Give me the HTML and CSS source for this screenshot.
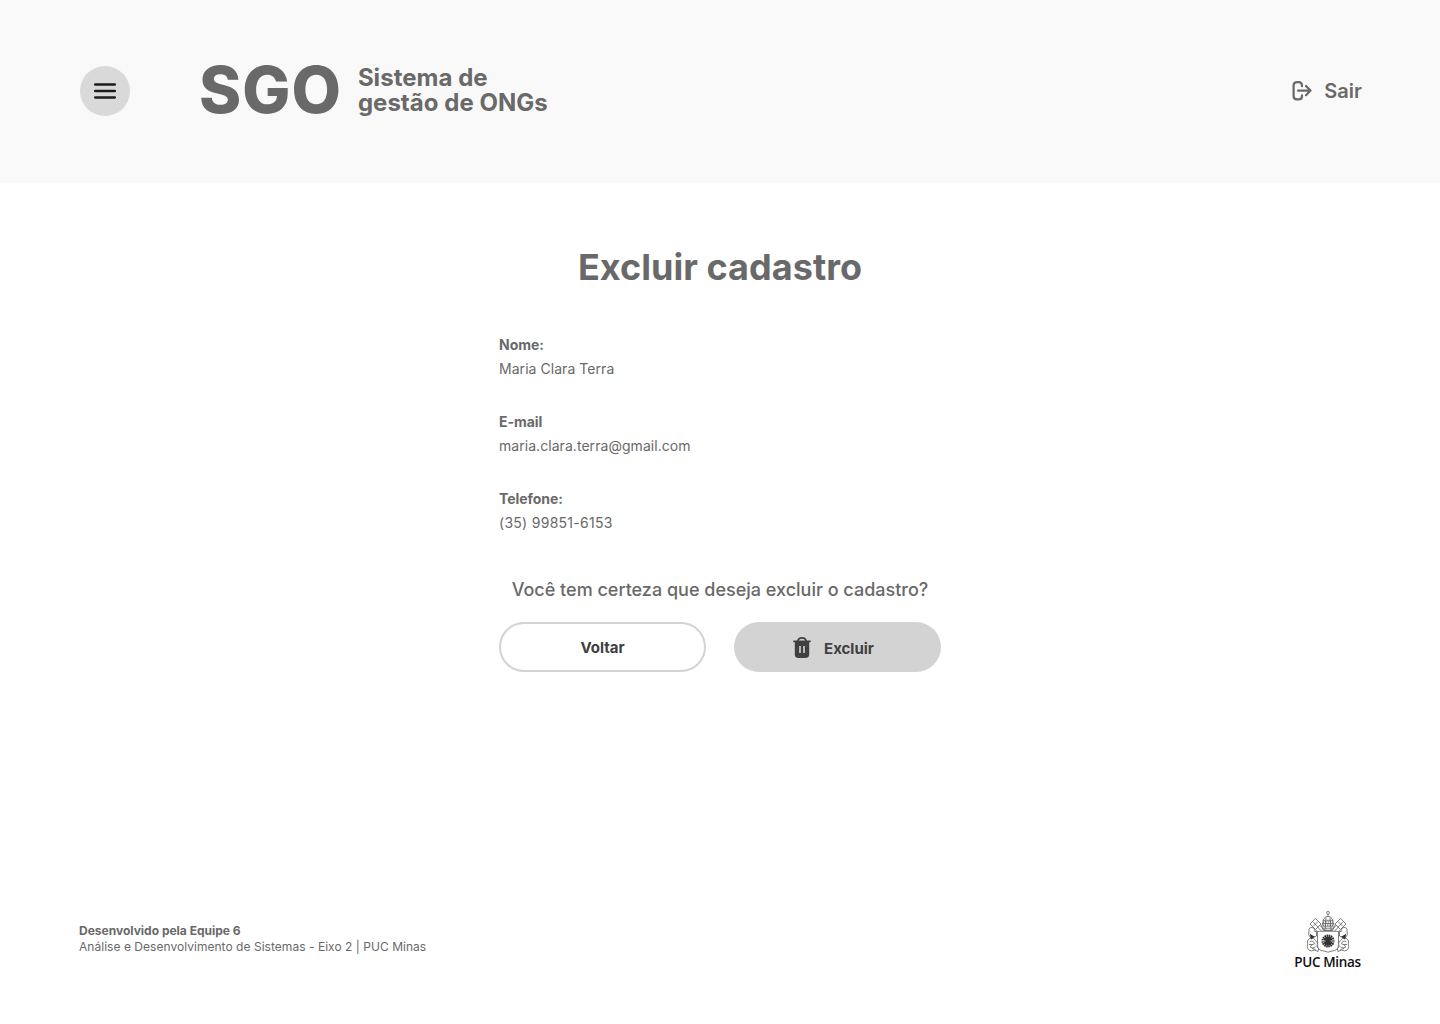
FILE: index.html
```html
<!DOCTYPE html>
<html lang="pt-BR">
<head>
<meta charset="utf-8">
<title>SGO - Excluir cadastro</title>
<link rel="stylesheet" href="styles.css">
</head>
<body>
<header class="header">
  <button class="menu" aria-label="Menu">
    <svg width="22" height="16" viewBox="0 0 22 16"><path d="M1.2 1.6h19.6M1.2 8h19.6M1.2 14.4h19.6" fill="none" stroke="#1d1d1d" stroke-width="2.5" stroke-linecap="round"/></svg>
  </button>
  <div class="brand">
    <span class="brand-short">SGO</span>
    <span class="brand-name">Sistema de<br>gestão de ONGs</span>
  </div>
  <a class="logout">
    <svg width="20" height="20" viewBox="0 0 20 20" fill="none" stroke="#696969" stroke-width="2.2" stroke-linecap="round" stroke-linejoin="round"><path d="M10 5.2V4.6Q10 1.2 6.6 1.2H5.2Q1.6 1.2 1.6 4.6V15Q1.6 18.4 5.2 18.4H6.6Q10 18.4 10 15V14.4M6 9.6H18.4M14 5 18.5 9.6 14 14.2"/></svg>
    <span>Sair</span>
  </a>
</header>
<main class="main">
  <h1 class="title">Excluir cadastro</h1>
  <section class="content">
    <dl class="fields">
      <div class="field"><dt>Nome:</dt><dd>Maria Clara Terra</dd></div>
      <div class="field"><dt>E-mail</dt><dd>maria.clara.terra@gmail.com</dd></div>
      <div class="field"><dt>Telefone:</dt><dd class="phone">(35) 99851-6153</dd></div>
    </dl>
    <p class="question">Você tem certeza que deseja excluir o cadastro?</p>
    <div class="actions">
      <button class="button button-outline">Voltar</button>
      <button class="button button-filled">
        <svg width="18" height="22" viewBox="0 0 18 22"><path d="M4.8 4.1C5.2 1.8 6.6.9 9 .9s3.8.9 4.2 3.2" fill="none" stroke="#404040" stroke-width="1.6"/><path d="M1 4.3H17" stroke="#404040" stroke-width="1.8" stroke-linecap="round"/><path fill="#404040" fill-rule="evenodd" d="M1.8 4.5H16.2V17.2Q16.2 21 12.5 21H5.5Q1.8 21 1.8 17.2ZM6.2 9V16H7.8V9ZM10.2 9V16H11.8V9Z"/></svg>
        <span>Excluir</span>
      </button>
    </div>
  </section>
</main>
<footer class="footer">
  <div class="credits"><strong>Desenvolvido pela Equipe 6</strong><br><span class="course">Análise e Desenvolvimento de Sistemas - Eixo 2 | PUC Minas</span></div>
  <div class="puc">
    <svg width="44" height="43" viewBox="0 0 44 43" fill="none" stroke="#606060" stroke-width=".8">
      <!-- tiara -->
      <circle cx="22" cy="2.8" r="1.4"/>
      <path d="M22 4.2V7M17 12C17 8.8 19 6.8 22 6.3 25 6.8 27 8.8 27 12L28.5 16.5 26.5 20.5H17.5L15.5 16.5ZM16.7 10.3H27.3M16 13.5H28M16.2 16.8H27.8M17.2 18.8H26.8M20 7.5 19 20M24 7.5 25 20"/>
      <path stroke="#444" stroke-dasharray="1.3 1" stroke-width="1.2" d="M17 12H27M16.5 15.2H27.5"/>
      <!-- crossed keys -->
      <path d="M4 14 9.5 8.5 15 14 9.5 19.5ZM40 14 34.5 8.5 29 14 34.5 19.5ZM6.5 11.5 12 17M37.5 11.5 32 17M12 11.5 7 16.5M32 11.5 37 16.5M13.5 15 19 20.5M11.5 17 15.5 21M30.5 15 25 20.5M32.5 17 28.5 21"/>
      <!-- supporters and mantling -->
      <g id="supporter"><path d="M3 21Q3 16.8 6.3 17.5 9.5 18 9 22L10.5 20.5V26Q7 28 4.5 27.5L2.5 24.5ZM4 28Q0 31 1.8 34 0 37 2.5 39.8 5 42 8.5 40L12 41.5Q14 38.5 11 36.5 12.5 32.5 9.5 30.5 8.5 27.5 4 28ZM3.8 31.5Q8 30 8.3 34 5 34 4.3 37.2 7 39 9.5 36.8M3 34.5H6.5M6 38.5 9.7 39.5"/><path d="M5 25.5 7.3 26.8 5.5 28Z" fill="#333" stroke="#333" stroke-width="1.8"/></g>
      <use href="#supporter" transform="matrix(-1 0 0 1 44 0)"/>
      <!-- shield -->
      <path d="M11.5 21.3H32.5V34.5Q32.5 40.8 26 41L22 42.2 18 41Q11.5 40.8 11.5 34.5Z" fill="#fff"/>
      <circle cx="22" cy="31" r="4.2" fill="#333" stroke="none"/>
      <circle cx="22" cy="31" r="5" stroke="#333" stroke-width="3" stroke-dasharray="1.5 .46"/>
      <path d="M15.5 31H19.5M24.5 31H28.5" stroke="#fff" stroke-width=".8"/>
    </svg>
    <span class="puc-name">PUC Minas</span>
  </div>
</footer>
</body>
</html>
```
FILE: styles.css
```css
* { box-sizing: border-box; margin: 0; padding: 0; }
body {
  min-height: 1024px;
  display: flex;
  flex-direction: column;
  background: #fff;
  color: #696969;
  font-family: Inter, sans-serif;
}
button { border: 0; font: inherit; }
svg { display: block; flex: none; }
.header {
  height: 183px;
  padding: 0 78px 2px 80px;
  display: flex;
  align-items: center;
  background: #f9f9f9;
}
.menu {
  width: 50px;
  height: 50px;
  margin-top: 1px;
  display: grid;
  place-items: center;
  border-radius: 50%;
  background: #d9d9d9;
}
.brand { display: flex; align-items: center; margin: -2px 0 0 69px; gap: 16px; font-weight: 700; white-space: nowrap; }
.brand-short { font-size: 64px; line-height: 78px; font-weight: 800; letter-spacing: 1px; }
.brand-name { font-size: 24px; line-height: 25px; letter-spacing: .03px; }
.logout { display: flex; align-items: center; gap: 12px; margin-left: auto; font-size: 20px; line-height: 24px; font-weight: 600; }
.main { flex: 1; display: flex; flex-direction: column; align-items: center; padding-top: 62px; }
.title { font-size: 36px; line-height: 44px; font-weight: 700; letter-spacing: .04px; }
.content { width: 442px; margin-top: 44px; }
.fields { display: flex; flex-direction: column; gap: 29px; font-size: 14px; line-height: 24px; }
.field dt { font-weight: 700; letter-spacing: -.04px; }
.field dd { letter-spacing: .05px; }
.field .phone { letter-spacing: .28px; }
.question { margin-top: 43px; font-size: 18px; line-height: 24px; font-weight: 500; text-align: center; white-space: nowrap; }
.actions { display: flex; gap: 28px; margin-top: 20px; }
.button {
  width: 207px;
  height: 50px;
  display: flex;
  align-items: center;
  justify-content: center;
  gap: 12px;
  border-radius: 25px;
  color: #404040;
  font-size: 15px;
  font-weight: 700;
}
.button-outline { border: 2px solid #d3d3d3; background: #fff; }
.button-filled { padding: 2px 8px 0 0; gap: 13px; background: #d3d3d3; }
.footer { display: flex; justify-content: space-between; align-items: flex-start; height: 114px; padding: 0 79px; }
.credits { margin-top: 13px; font-size: 12px; line-height: 16px; }
.course { letter-spacing: .035px; }
.puc { width: 67px; display: flex; flex-direction: column; align-items: center; }
.puc-name { margin-top: 1px; font-family: "Open Sans", sans-serif; font-size: 13.5px; line-height: 16px; font-weight: 600; letter-spacing: -.35px; color: #111; white-space: nowrap; }
```
